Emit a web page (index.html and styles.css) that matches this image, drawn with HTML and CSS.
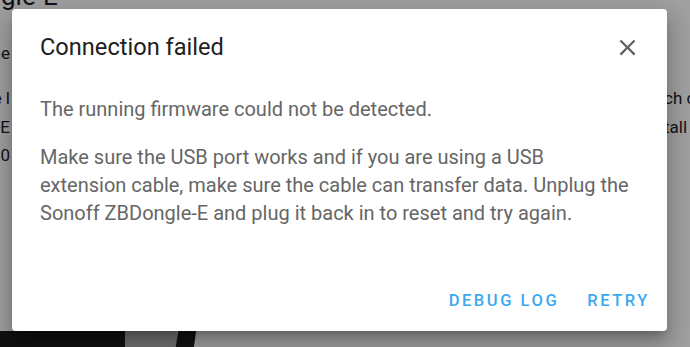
FILE: index.html
```html
<!DOCTYPE html>
<html lang="en">
<head>
<meta charset="utf-8">
<title>Connection failed</title>
<link rel="stylesheet" href="styles.css">
</head>
<body>
<div class="page">
  <h1 class="page-title">Sonoff ZBDongle-E</h1>
  <div class="page-cols">
    <div class="col-left">
      <p class="lead">Use the</p>
      <p>Plug in the l</p>
      <p>ZBDongle-E</p>
      <p>version 7.1.0</p>
    </div>
    <div class="col-right">
      <p class="lead">&nbsp;</p>
      <p>ch c</p>
      <p>tall</p>
    </div>
  </div>
  <div class="page-image">
    <div class="img-dark"></div>
    <div class="img-gray"></div>
    <div class="img-slant"></div>
    <div class="img-rest"></div>
  </div>
</div>
<div class="scrim"></div>
<div class="dialog" role="dialog">
  <div class="dialog-header">
    <h2 class="dialog-title">Connection failed</h2>
    <button class="close-btn" aria-label="Close">
      <svg viewBox="0 0 24 24" width="27" height="27"><path d="M19,6.41L17.59,5L12,10.59L6.41,5L5,6.41L10.59,12L5,17.59L6.41,19L12,13.41L17.59,19L19,17.59L13.41,12L19,6.41Z"/></svg>
    </button>
  </div>
  <div class="dialog-content">
    <p>The running firmware could not be detected.</p>
    <p>Make sure the USB port works and if you are using a USB<br>extension cable, make sure the cable can transfer data. Unplug the Sonoff ZBDongle-E and plug it back in to reset and try again.</p>
  </div>
  <div class="dialog-actions">
    <button class="text-btn">Debug Log</button>
    <button class="text-btn">Retry</button>
  </div>
</div>
</body>
</html>
```

FILE: styles.css
```css
html, body {
  margin: 0;
  padding: 0;
}
body {
  width: 690px;
  height: 347px;
  overflow: hidden;
  background: #ffffff;
  font-family: Roboto, "Liberation Sans", sans-serif;
  position: relative;
}
.page {
  height: 347px;
  display: flex;
  flex-direction: column;
  color: #1c1c28;
}
.page-title {
  margin: -17px 0 0 -161px;
  font-size: 26px;
  font-weight: 400;
  line-height: 26px;
  white-space: nowrap;
}
.page-cols {
  display: flex;
  justify-content: space-between;
  margin-top: 30px;
}
.col-left {
  width: 10px;
  overflow: hidden;
  display: flex;
  flex-direction: column;
  align-items: flex-end;
}
.col-left p, .col-right p {
  margin: 0;
  font-size: 17px;
  line-height: 28.5px;
  white-space: nowrap;
}
.col-left p.lead, .col-right p.lead {
  margin-bottom: 16.5px;
}
.col-right {
  width: 26px;
  overflow: hidden;
}
.page-image {
  margin-top: auto;
  display: flex;
  height: 16px;
}
.img-dark { width: 125px; background: #1a1a1a; }
.img-gray { width: 52px; background: #b4b4b4; }
.img-slant { width: 18px; background: #1d1d1d; transform: skewX(-8deg); }
.img-rest { flex: 1; background: #ffffff; }
.scrim {
  position: absolute;
  inset: 0;
  background: rgba(0, 0, 0, 0.37);
}
.dialog {
  position: absolute;
  left: 12px;
  top: 9px;
  width: 655px;
  height: 322px;
  background: #ffffff;
  border-radius: 4px;
  box-shadow: 0 12px 20px 2px rgba(0,0,0,0.18), 0 8px 30px 8px rgba(0,0,0,0.10), 0 6px 8px -4px rgba(0,0,0,0.25);
  display: flex;
  flex-direction: column;
  box-sizing: border-box;
}
.dialog-header {
  display: flex;
  align-items: center;
  justify-content: space-between;
  padding: 11px 13px 0 28px;
}
.dialog-title {
  margin: 0;
  font-size: 23.6px;
  font-weight: 400;
  line-height: 36px;
  color: #212121;
}
.close-btn {
  width: 54px;
  height: 54px;
  border: 0;
  background: transparent;
  padding: 0;
  display: flex;
  align-items: center;
  justify-content: center;
  fill: #5f5f5f;
}
.dialog-content {
  padding: 0 28px;
  margin-top: 21px;
  color: #666666;
  font-size: 20px;
  line-height: 28px;
}
.dialog-content p {
  margin: 0 0 20px 0;
}
.dialog-actions {
  margin-top: auto;
  display: flex;
  justify-content: flex-end;
  gap: 12px;
  padding: 9px 9px 11px 0;
}
.text-btn {
  border: 0;
  background: transparent;
  font-family: Roboto, "Liberation Sans", sans-serif;
  font-size: 16.5px;
  font-weight: 500;
  letter-spacing: 2.55px;
  text-transform: uppercase;
  color: #3aa9f0;
  height: 40px;
  padding: 0 8px;
}
```
